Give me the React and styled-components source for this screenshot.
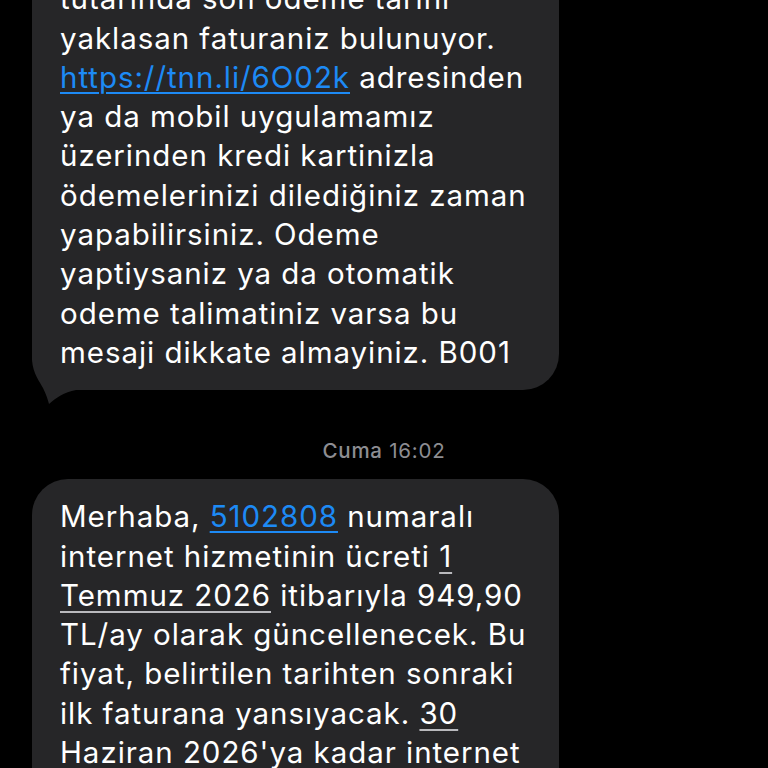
import React from 'react'
import styled, { createGlobalStyle } from 'styled-components'

const Global = createGlobalStyle`
  html, body { margin: 0; padding: 0; background: #000; }
  body { font-family: Inter, "Noto Sans", sans-serif; -webkit-font-smoothing: antialiased; }
`

const Screen = styled.div`
  width: 768px;
  height: 768px;
  overflow: hidden;
  background: #000;
`

const Thread = styled.div`
  display: flex;
  flex-direction: column;
  margin-top: -78px;
  padding: 0 32px;
`

const Bubble = styled.div`
  position: relative;
  width: 527px;
  box-sizing: border-box;
  background: #262628;
  border-radius: 36px;
  padding: 18px 0 18px 28px;
  color: #fff;
  font-size: 29.5px;
  line-height: 39.3px;
  letter-spacing: 0.95px;
`

const Line = styled.div`
  position: relative;
  white-space: nowrap;
`

const Link = styled.span`
  color: #1d8af5;
  text-decoration: underline;
  text-decoration-thickness: 2px;
  text-underline-offset: 4px;
`

const DateLink = styled.span`
  text-decoration: underline;
  text-decoration-color: #b9b9bd;
  text-decoration-thickness: 2px;
  text-underline-offset: 5px;
`

const Tail = styled.svg`
  position: absolute;
  left: 0;
  bottom: -16px;
  width: 44px;
  height: 56px;
`

const Stamp = styled.div`
  margin: 49px 0 16px;
  text-align: center;
  font-size: 20.5px;
  line-height: 24px;
  letter-spacing: 0.75px;
  color: #8d8d92;
  b { font-weight: 500; }
`

export default function App() {
  return (
    <Screen>
      <Global />
      <Thread>
        <Bubble>
          <Tail viewBox="0 0 44 56">
            <path
              d="M0 0 L0 10 C1 24 8 32 11 38 C14 44 16 50 17 54 C24 48 32 42 44 40 L44 0 Z"
              fill="#262628"
            />
          </Tail>
          <Line>0000 TL fatura</Line>
          <Line>tutarinda son odeme tarihi</Line>
          <Line>yaklasan faturaniz bulunuyor.</Line>
          <Line><Link>https://tnn.li/6O02k</Link> adresinden</Line>
          <Line>ya da mobil uygulamamız</Line>
          <Line>üzerinden kredi kartinizla</Line>
          <Line>ödemelerinizi dilediğiniz zaman</Line>
          <Line>yapabilirsiniz. Odeme</Line>
          <Line>yaptiysaniz ya da otomatik</Line>
          <Line>odeme talimatiniz varsa bu</Line>
          <Line>mesaji dikkate almayiniz. B001</Line>
        </Bubble>
        <Stamp><b>Cuma</b> 16:02</Stamp>
        <Bubble>
          <Line>Merhaba, <Link>5102808</Link> numaralı</Line>
          <Line>internet hizmetinin ücreti <DateLink>1</DateLink></Line>
          <Line><DateLink>Temmuz 2026</DateLink> itibarıyla 949,90</Line>
          <Line>TL/ay olarak güncellenecek. Bu</Line>
          <Line>fiyat, belirtilen tarihten sonraki</Line>
          <Line>ilk faturana yansıyacak. <DateLink>30</DateLink></Line>
          <Line><DateLink>Haziran 2026</DateLink>'ya kadar internet</Line>
          <Line>hizmetini iptal edebilirsin.</Line>
        </Bubble>
      </Thread>
    </Screen>
  )
}
